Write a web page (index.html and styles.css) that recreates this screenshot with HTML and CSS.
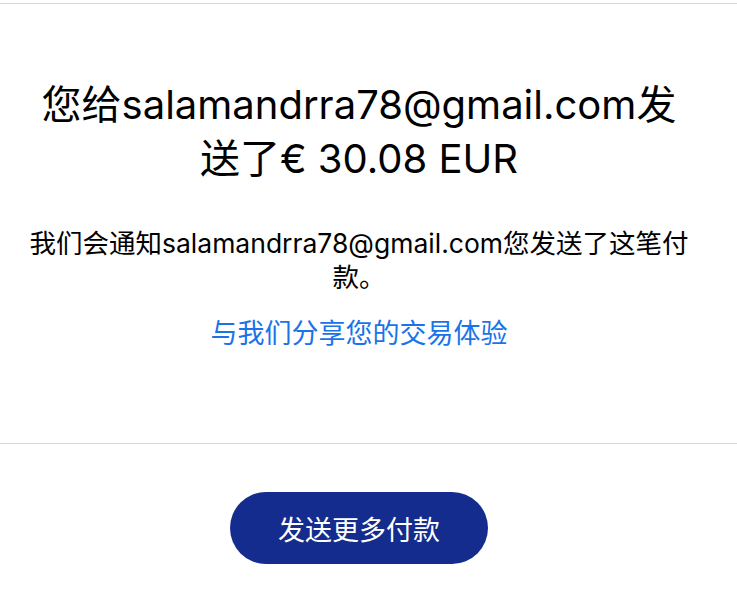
FILE: index.html
```html
<html>
<head>
  <title>付款已发送</title>
  <link rel="stylesheet" href="styles.css">
</head>
<body>
  <div class="page">
    <!-- Confirmation message -->
    <section class="confirm">
      <h1>您给salamandrra78@gmail.com发送了€ 30.08 EUR</h1>
      <p class="notice">我们会通知salamandrra78@gmail.com您发送了这笔付款。</p>
      <a class="feedback" href="#">与我们分享您的交易体验</a>
    </section>

    <!-- Actions -->
    <div class="actions">
      <button class="send-more">发送更多付款</button>
    </div>
  </div>
</body>
</html>
```

FILE: styles.css
```css
/* Page base */
body {
  margin: 0;
  font-family: Inter, "Noto Sans CJK SC", sans-serif;
  color: #000;
  background: #fff;
}

.page {
  margin-top: 3px;
  border-top: 1px solid #dad8d2;
}

/* Confirmation block */
.confirm {
  text-align: center;
  padding: 74px 43px 0 24px;
  height: 440px;
  box-sizing: border-box;
  border-bottom: 1px solid #dad8d2;
}

.confirm h1 {
  margin: 0;
  font-size: 40px;
  font-weight: 400;
  line-height: 54px;
}

.notice {
  margin: 40px 0 0;
  font-size: 26.5px;
  line-height: 34px;
}

.feedback {
  display: inline-block;
  margin-top: 21px;
  font-size: 27px;
  line-height: 38px;
  color: #1a73e8;
  text-decoration: none;
}

/* Bottom button */
.actions {
  display: flex;
  justify-content: center;
  padding: 48px 19px 0 0;
}

.send-more {
  width: 258px;
  height: 72px;
  border: none;
  border-radius: 36px;
  background: #142c8e;
  color: #fff;
  font-family: inherit;
  font-size: 27px;
  cursor: pointer;
}
```
